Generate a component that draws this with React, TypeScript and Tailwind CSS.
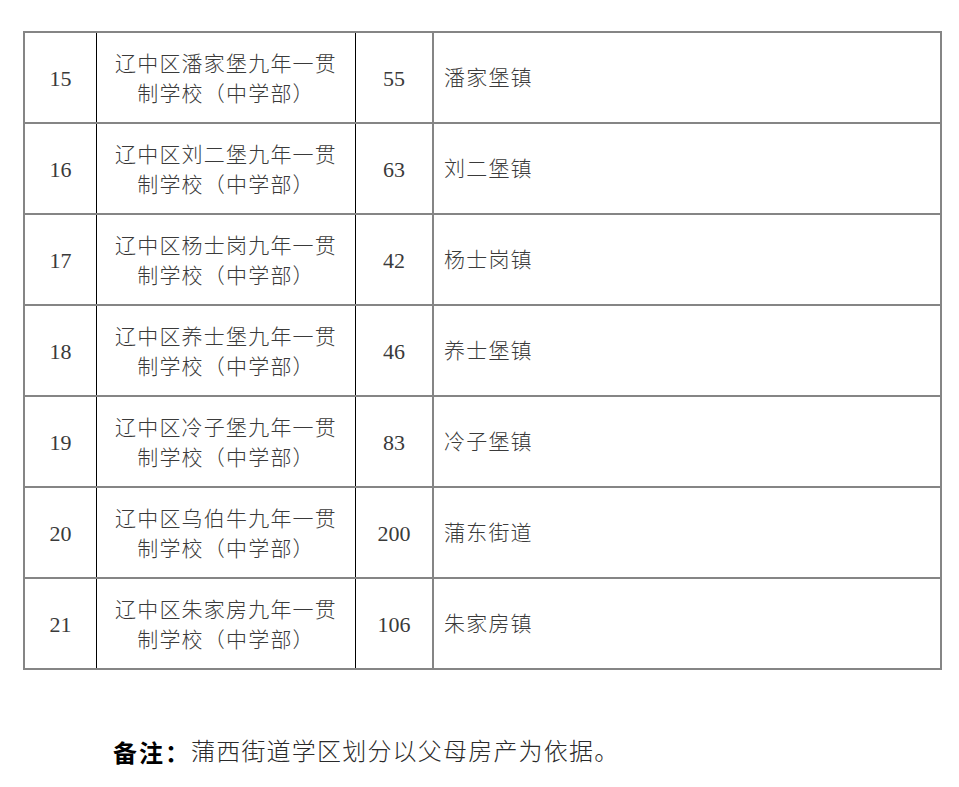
import React from "react";

const rows = [
  { n: "15", name: "潘家堡", count: "55", town: "潘家堡镇" },
  { n: "16", name: "刘二堡", count: "63", town: "刘二堡镇" },
  { n: "17", name: "杨士岗", count: "42", town: "杨士岗镇" },
  { n: "18", name: "养士堡", count: "46", town: "养士堡镇" },
  { n: "19", name: "冷子堡", count: "83", town: "冷子堡镇" },
  { n: "20", name: "乌伯牛", count: "200", town: "蒲东街道" },
  { n: "21", name: "朱家房", count: "106", town: "朱家房镇" },
];

const serif = { fontFamily: '"Liberation Serif", "Noto Sans CJK SC", serif' };

export default function App() {
  return (
    <div className="w-[959px] h-[787px] bg-white overflow-hidden" style={serif}>
      <div className="pt-[31px] pl-[23px]">
        <div className="w-[919px] border-l-2 border-r-2 border-t-2 border-[#858585] text-[#3a3a3a]">
          {rows.map((r) => (
            <div key={r.n} className="flex h-[91px] border-b-2 border-[#858585]">
              <div className="w-[72px] shrink-0 border-r border-black flex items-center justify-center text-[22px] pt-[2px]">
                {r.n}
              </div>
              <div className="w-[259px] shrink-0 border-r border-black flex flex-col items-center justify-center text-[21px] leading-[30px] font-light tracking-[1.2px] pt-[2px]">
                <span>辽中区{r.name}九年一贯</span>
                <span>制学校（中学部）</span>
              </div>
              <div className="w-[78px] shrink-0 border-r-2 border-[#858585] flex items-center justify-center text-[22px] pt-[2px]">
                {r.count}
              </div>
              <div className="flex-1 flex items-center pl-[10px] text-[21px] font-light tracking-[1.2px] pt-[2px]">
                {r.town}
              </div>
            </div>
          ))}
        </div>
      </div>
      <div className="mt-[66px] pl-[113px] flex items-center text-[24px] leading-[32px]">
        <span
          className="font-bold text-black tracking-[2px]"
          style={{ fontFamily: '"Noto Sans CJK SC", sans-serif' }}
        >
          备注：
        </span>
        <span className="text-[#2a2a2a] font-light tracking-[1.2px]">蒲西街道学区划分以父母房产为依据。</span>
      </div>
    </div>
  );
}
